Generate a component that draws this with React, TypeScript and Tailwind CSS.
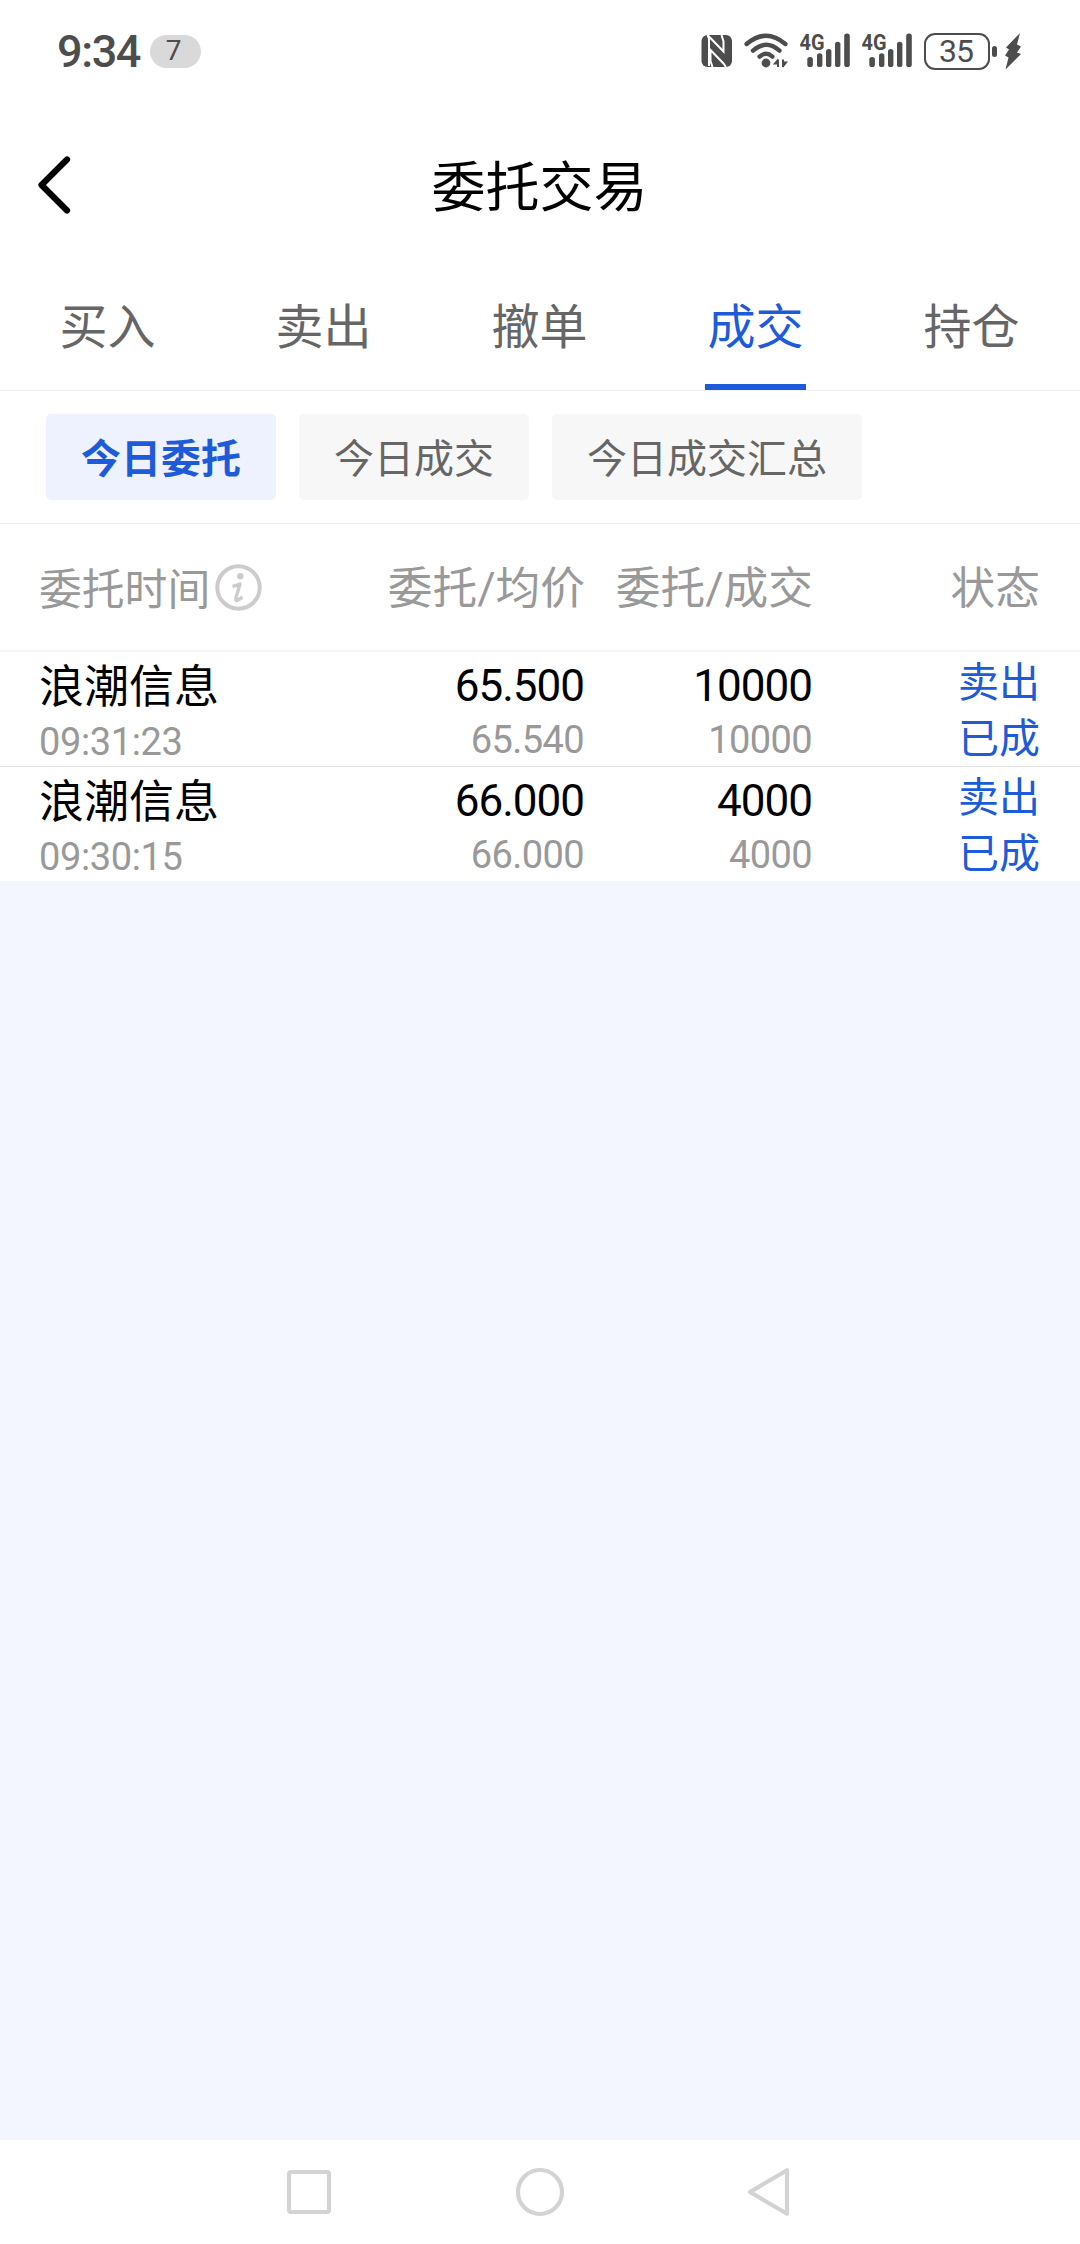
import { clsx } from "clsx";

const tabs = ["买入", "卖出", "撤单", "成交", "持仓"];
const filters = ["今日委托", "今日成交", "今日成交汇总"];

const orders = [
  {
    name: "浪潮信息",
    time: "09:31:23",
    price: "65.500",
    avgPrice: "65.540",
    amount: "10000",
    filled: "10000",
    side: "卖出",
    status: "已成",
  },
  {
    name: "浪潮信息",
    time: "09:30:15",
    price: "66.000",
    avgPrice: "66.000",
    amount: "4000",
    filled: "4000",
    side: "卖出",
    status: "已成",
  },
];

function SignalIcon() {
  return (
    <svg width="52" height="50" viewBox="0 -6 52 50" fill="#4d4d4d">
      <text
        x="-0.5"
        y="17.5"
        fontSize="22"
        fontWeight="700"
        fontFamily="Roboto, sans-serif"
        textLength="25"
        lengthAdjust="spacingAndGlyphs"
      >
        4G
      </text>
      <rect x="7.3" y="25" width="5.6" height="10" rx="2.6" />
      <rect x="17" y="21.3" width="5.4" height="13.7" rx="2.6" />
      <rect x="26" y="17" width="5.4" height="18" rx="2.6" />
      <rect x="35" y="9.7" width="5.4" height="25.3" rx="2.6" />
      <rect x="44.2" y="1.5" width="5.6" height="33.5" rx="2.6" />
    </svg>
  );
}

function StatusBar() {
  return (
    <div className="flex h-[102px] items-center pl-[57px] pr-[58px] text-[#4d4d4d]">
      <span className="w-[93px] whitespace-nowrap text-[45px] leading-none font-medium tracking-[-1.4px]">
        9:34
      </span>
      <span className="flex h-[33px] w-[51px] items-center justify-center rounded-full bg-[#d9d9d9] pr-1 text-[28px] leading-none">
        7
      </span>
      <div className="ml-auto flex items-center">
        <svg width="32" height="34" viewBox="0 0 32 34" className="mr-[11px]">
          <rect x="0.5" y="1" width="30.5" height="32" rx="6" fill="#4d4d4d" />
          <path
            d="M6.5 1 8 4.5V32M6.5 1 22.5 17.5V7.5L20.5 1M25 33 22.5 29.5 9.5 16V27L11.5 33"
            fill="none"
            stroke="#fff"
            strokeWidth="2"
          />
        </svg>
        <svg width="46" height="38" viewBox="0 0 46 38" className="mr-[10px]" fill="none">
          <g stroke="#4d4d4d" strokeWidth="4.4" strokeLinecap="round">
            <path d="M2.6 12Q22 -4.5 41.4 12" />
            <path d="M9 18.6Q22 7 35.5 18.6" />
            <path d="M15.6 24.6Q22 19 28.4 24.6" />
          </g>
          <circle cx="22" cy="31" r="4.4" fill="#4d4d4d" />
          <path
            d="M34 27.5V35M34.5 27.5 31 31.5H34.5M39 35V27.5M38.5 35 42 30.5H38.5"
            stroke="#4d4d4d"
            strokeWidth="2"
          />
        </svg>
        <div className="mr-[10px]">
          <SignalIcon />
        </div>
        <div className="mr-[10px]">
          <SignalIcon />
        </div>
        <span className="flex h-[37px] w-[66px] items-center justify-center rounded-[11px] border-[2.5px] border-[#4d4d4d] pr-[2px] text-[32px] leading-none tracking-[-1px]">
          35
        </span>
        <span className="ml-[2px] h-[11px] w-[5px] rounded-full bg-[#4d4d4d]" />
        <svg width="18" height="38" viewBox="0 0 18 38" className="ml-[7px]" fill="#4d4d4d">
          <path d="M16 1 2 15.5 5 17.5 1 23.5 4.5 25.5 1.5 37.5 17 22 13 20.5 17 14.5 13 12.5Z" />
        </svg>
      </div>
    </div>
  );
}

function InfoIcon() {
  return (
    <svg width="47" height="47" viewBox="0 0 47 47" fill="none">
      <circle cx="23.5" cy="23.5" r="21.2" stroke="#ccc" strokeWidth="4" />
      <circle cx="25.3" cy="12.3" r="3.2" fill="#ccc" />
      <path
        d="M17.5 22.5Q22 21.5 25 20L21 33.5Q20 37.3 22.5 36.3L27.5 33"
        stroke="#ccc"
        strokeWidth="3.4"
        strokeLinejoin="round"
      />
    </svg>
  );
}

export default function App() {
  return (
    <div className="flex h-[2244px] w-[1080px] flex-col overflow-hidden bg-white font-[Roboto,'Noto_Sans_CJK_SC',sans-serif] text-black">
      <StatusBar />

      <header className="grid h-[166px] grid-cols-3 items-center">
        <svg width="40" height="60" viewBox="0 0 40 60" className="ml-[34px]" fill="none">
          <path
            d="M33 4.5 7.5 30 33 55.5"
            stroke="#000"
            strokeWidth="6.2"
            strokeLinecap="round"
            strokeLinejoin="round"
          />
        </svg>
        <h1 className="pt-2 pr-px text-center text-[54px] leading-[80px]">委托交易</h1>
      </header>

      <nav className="grid h-[123px] grid-cols-5 border-b border-[#f0f0f0] text-[48px] text-[#666]">
        {tabs.map((tab) => (
          <div key={tab} className="flex flex-col items-center pr-px">
            <span className={clsx("h-[116px] leading-[120px]", tab === "成交" && "text-[#1d5bd8]")}>
              {tab}
            </span>
            {tab === "成交" && <span className="h-1.5 w-[101px] bg-[#1d5bd8]" />}
          </div>
        ))}
      </nav>

      <div className="flex h-[133px] items-center gap-[23px] border-b border-[#f0f0f0] pl-[46px] text-[40px]">
        {filters.map((filter, i) => (
          <button
            key={filter}
            className={clsx(
              "h-[86px] rounded-[5px] px-[35px] pt-px leading-[90px]",
              i === 0 ? "bg-[#edf2fe] font-bold text-[#1d5bd8]" : "bg-[#f7f7f7] text-[#666]"
            )}
          >
            {filter}
          </button>
        ))}
      </div>

      <div className="grid h-32 grid-cols-[271px_274px_228px_227px] items-center border-b-2 border-[#f5f5f5] px-10 text-right text-[44.7px] leading-[60px] text-[#999]">
        <div className="flex items-center gap-[5px] text-[42.8px]">
          <span className="-ml-px pt-[5px]">委托时间</span>
          <InfoIcon />
        </div>
        <div className="pt-1">委托/均价</div>
        <div className="pt-1">委托/成交</div>
        <div className="pt-1">状态</div>
      </div>

      <div className="divide-y divide-[#e5e5e5]">
        {orders.map((order) => (
          <div
            key={order.time}
            className="grid grid-cols-[271px_274px_228px_227px] px-10 text-right"
          >
            <div className="h-[114px] pt-2 text-left">
              <div className="-ml-px text-[45px] leading-[56px]">{order.name}</div>
              <div className="mt-0.5 -ml-px text-[38px] leading-[48px] tracking-[-0.4px] text-[#999]">
                {order.time}
              </div>
            </div>
            <div className="pt-1.5 pr-px">
              <div className="text-[44px] leading-[56px] tracking-[-1px]">{order.price}</div>
              <div className="mt-0.5 text-[38px] leading-[48px] tracking-[-0.6px] text-[#999]">
                {order.avgPrice}
              </div>
            </div>
            <div className="pt-1.5 pr-px">
              <div className="text-[44px] leading-[56px] tracking-[-1px]">{order.amount}</div>
              <div className="mt-0.5 text-[38px] leading-[48px] tracking-[-0.6px] text-[#999]">
                {order.filled}
              </div>
            </div>
            <div className="h-[114px] pt-[3px] text-[41px] leading-[56px] text-[#1d5bd8]">
              <div>{order.side}</div>
              <div>{order.status}</div>
            </div>
          </div>
        ))}
      </div>

      <main className="flex-1 bg-[#f3f6ff]" />

      <footer className="flex h-[104px] items-center justify-between pr-[287px] pl-[285px]">
        <svg width="48" height="52" viewBox="0 0 48 52" fill="none">
          <rect x="4" y="6" width="40" height="40" rx="2" stroke="#d3d3d3" strokeWidth="4.2" />
        </svg>
        <svg width="52" height="52" viewBox="0 0 52 52" fill="none">
          <circle cx="26" cy="26" r="22" stroke="#d3d3d3" strokeWidth="4.2" />
        </svg>
        <svg width="46" height="52" viewBox="0 0 46 52" fill="none">
          <path
            d="M40 4.2V47.8L3 26Z"
            stroke="#d3d3d3"
            strokeWidth="4.2"
            strokeLinejoin="round"
          />
        </svg>
      </footer>
    </div>
  );
}
